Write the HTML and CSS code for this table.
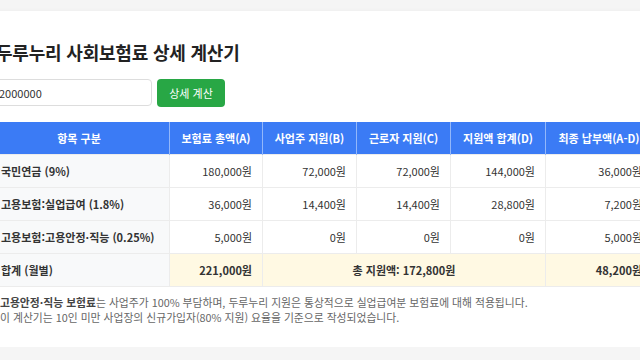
FILE: index.html
```html
<!DOCTYPE html>
<html lang="ko">
<head>
    <meta charset="UTF-8">
    <meta name="viewport" content="width=device-width, initial-scale=1.0">
    <title>두루누리 사회보험료 상세 계산기</title>
    <link rel="stylesheet" href="styles.css">
</head>
<body>
    <div class="page">
        <div class="card">
            <h1>두루누리 사회보험료 상세 계산기</h1>

            <div class="controls">
                <input type="text" id="salary" value="2000000">
                <button>상세 계산</button>
            </div>

            <table>
                <colgroup>
                    <col class="col-name">
                    <col class="col-a">
                    <col class="col-b">
                    <col class="col-c">
                    <col class="col-d">
                    <col class="col-final">
                </colgroup>
                <thead>
                    <tr>
                        <th>항목 구분</th>
                        <th>보험료 총액(A)</th>
                        <th>사업주 지원(B)</th>
                        <th>근로자 지원(C)</th>
                        <th>지원액 합계(D)</th>
                        <th>최종 납부액(A-D)</th>
                    </tr>
                </thead>
                <tbody>
                    <tr>
                        <td class="name">국민연금 (9%)</td>
                        <td>180,000원</td>
                        <td>72,000원</td>
                        <td>72,000원</td>
                        <td>144,000원</td>
                        <td>36,000원</td>
                    </tr>
                    <tr>
                        <td class="name">고용보험:실업급여 (1.8%)</td>
                        <td>36,000원</td>
                        <td>14,400원</td>
                        <td>14,400원</td>
                        <td>28,800원</td>
                        <td>7,200원</td>
                    </tr>
                    <tr>
                        <td class="name">고용보험:고용안정·직능 (0.25%)</td>
                        <td>5,000원</td>
                        <td>0원</td>
                        <td>0원</td>
                        <td>0원</td>
                        <td>5,000원</td>
                    </tr>
                    <tr class="total">
                        <td class="name">합계 (월별)</td>
                        <td>221,000원</td>
                        <td colspan="3" class="center">총 지원액: 172,800원</td>
                        <td>48,200원</td>
                    </tr>
                </tbody>
            </table>

            <div class="notes">
                <p><b>고용안정·직능 보험료</b>는 사업주가 100% 부담하며, 두루누리 지원은 통상적으로 실업급여분 보험료에 대해 적용됩니다.</p>
                <p>이 계산기는 10인 미만 사업장의 신규가입자(80% 지원) 요율을 기준으로 작성되었습니다.</p>
            </div>
        </div>
    </div>
</body>
</html>
```

FILE: styles.css
```css
body {
    margin: 0;
    font-family: "Noto Sans CJK KR", sans-serif;
    background: #f5f5f5;
    color: #333;
    overflow: hidden;
}

.page {
    display: flex;
    justify-content: center;
    padding-top: 11px;
}

.card {
    flex: none;
    width: 664px;
    padding: 28px 20px 22px;
    background: white;
    box-shadow: 0px 2px 6px rgba(0, 0, 0, 0.08);
}

h1 {
    margin: 0 0 14px;
    padding-left: 8px;
    font-size: 18px;
    line-height: 26px;
    letter-spacing: -0.2px;
    color: #222;
}

.controls {
    display: flex;
    gap: 5px;
    margin-bottom: 15px;
}

.controls input {
    width: 164px;
    height: 27px;
    box-sizing: border-box;
    padding: 0 10px;
    border: 1px solid #ddd;
    border-radius: 4px;
    font-family: inherit;
    font-size: 11px;
    color: #333;
}

.controls button {
    width: 68px;
    height: 28px;
    background: #28a745;
    color: white;
    border: none;
    border-radius: 4px;
    font-family: inherit;
    font-size: 11px;
    cursor: pointer;
}

table {
    width: 664px;
    table-layout: fixed;
    border-collapse: collapse;
    font-size: 11px;
}

.col-name { width: 181px; }
.col-a { width: 93px; }
.col-b { width: 94px; }
.col-c { width: 94px; }
.col-d { width: 95px; }
.col-final { width: 107px; }

table th {
    height: 32px;
    padding: 0 6px;
    background: #3b7bf5;
    color: white;
    font-weight: bold;
    text-align: center;
    border: 1px solid #93b7fa;
    border-top: none;
    border-bottom: none;
}

table td {
    height: 32px;
    padding: 0 10px;
    text-align: right;
    border: 1px solid #ececec;
    white-space: nowrap;
}

table td.name {
    text-align: left;
    padding-left: 12px;
    background: #f8f9fa;
    font-weight: bold;
}

.total td {
    background: #fff9e3;
    font-weight: bold;
}

.total td.center {
    text-align: center;
}

.notes {
    margin-top: 8px;
    padding-left: 12px;
    font-size: 10.8px;
    line-height: 15px;
    color: #666;
}

.notes p {
    margin: 0;
}

.notes b {
    color: #444;
}
```
